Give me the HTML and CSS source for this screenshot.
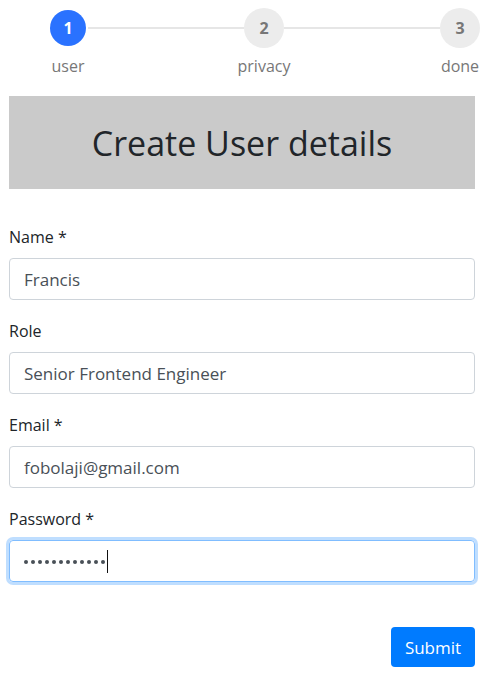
FILE: index.html
```html
<!DOCTYPE html>
<html>
<head>
<meta charset="utf-8">
<link rel="stylesheet" href="styles.css">
</head>
<body>
<div class="stepper">
  <div class="step">
    <div class="circle active">1</div>
    <div class="step-label">user</div>
  </div>
  <div class="connector"></div>
  <div class="step">
    <div class="circle">2</div>
    <div class="step-label">privacy</div>
  </div>
  <div class="connector"></div>
  <div class="step">
    <div class="circle">3</div>
    <div class="step-label">done</div>
  </div>
</div>
<div class="page">
  <div class="banner"><h1 class="banner-title">Create User details</h1></div>
  <form class="form">
    <div class="group">
      <label class="label">Name *</label>
      <div class="input">Francis</div>
    </div>
    <div class="group">
      <label class="label">Role</label>
      <div class="input">Senior Frontend Engineer</div>
    </div>
    <div class="group">
      <label class="label">Email *</label>
      <div class="input">fobolaji@gmail.com</div>
    </div>
    <div class="group">
      <label class="label">Password *</label>
      <div class="input focused"><span class="dots"><span class="dot"></span><span class="dot"></span><span class="dot"></span><span class="dot"></span><span class="dot"></span><span class="dot"></span><span class="dot"></span><span class="dot"></span><span class="dot"></span><span class="dot"></span><span class="dot"></span><span class="dot"></span></span><span class="caret"></span></div>
    </div>
    <div class="actions">
      <button type="button" class="btn">Submit</button>
    </div>
  </form>
</div>
</body>
</html>
```
FILE: styles.css
```css
* { box-sizing: border-box; }
body {
  margin: 0;
  font-family: "Open Sans", "Noto Sans", sans-serif;
  color: #212529;
  background: #fff;
}
.stepper {
  display: flex;
  margin: 8px 6px 0 48px;
}
.step {
  width: 40px;
  display: flex;
  flex-direction: column;
  align-items: center;
}
.circle {
  width: 40px;
  height: 40px;
  border-radius: 50%;
  background: #ececec;
  color: #777;
  font-weight: 700;
  font-size: 16px;
  display: flex;
  align-items: center;
  justify-content: center;
}
.circle.active {
  width: 36px;
  height: 36px;
  margin: 2px;
  background: #2a72ff;
  color: #fff;
}
.step-label {
  margin-top: 6px;
  font-size: 16px;
  line-height: 24px;
  color: #777;
  white-space: nowrap;
}
.connector {
  flex: 1;
  height: 2px;
  margin-top: 19px;
  background: #e6e6e6;
}
.page {
  padding: 18px 11px 0 9px;
}
.banner {
  height: 93px;
  background: #cacaca;
  display: flex;
  align-items: center;
  justify-content: center;
}
.banner-title {
  margin: 0;
  font-size: 34px;
  font-weight: 500;
  color: #212529;
}
.form {
  margin-top: 36px;
}
.group {
  margin-bottom: 19px;
}
.label {
  display: block;
  font-size: 16px;
  line-height: 24px;
  margin-bottom: 9px;
}
.input {
  height: 42px;
  border: 1px solid #ced4da;
  border-radius: 4px;
  padding: 0 14px;
  display: flex;
  align-items: center;
  font-size: 17px;
  color: #495057;
}
.input.focused {
  border-color: #80bdff;
  box-shadow: 0 0 0 3px rgba(0, 123, 255, 0.25);
}
.dots {
  display: flex;
  gap: 3px;
  margin-top: 1px;
}
.dot {
  width: 4px;
  height: 4px;
  border-radius: 50%;
  background: #495057;
}
.caret {
  display: inline-block;
  width: 1px;
  height: 23px;
  background: #111;
  margin-left: 2px;
}
.actions {
  display: flex;
  justify-content: flex-end;
  margin-top: 45px;
}
.btn {
  width: 84px;
  height: 40px;
  border: none;
  border-radius: 4px;
  background: #007bff;
  color: #fff;
  font-family: inherit;
  font-size: 17px;
  cursor: pointer;
}
```
